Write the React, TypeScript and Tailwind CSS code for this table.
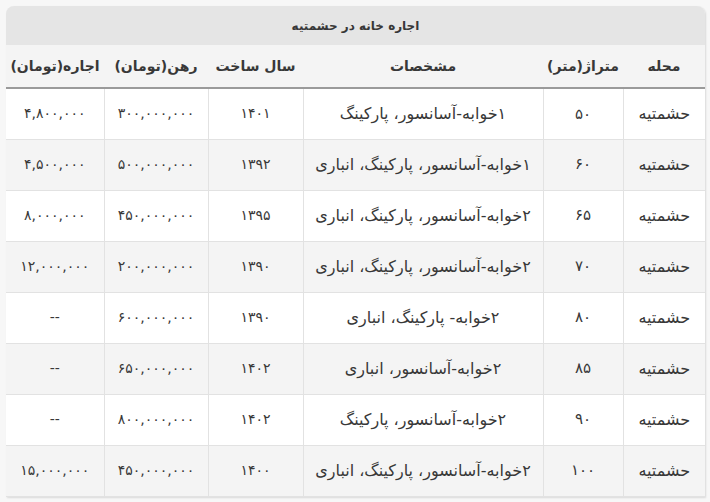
import React from 'react';

const rows = [
  ['حشمتیه', '۵۰', '۱خوابه-آسانسور، پارکینگ', '۱۴۰۱', '۳۰۰,۰۰۰,۰۰۰', '۴,۸۰۰,۰۰۰'],
  ['حشمتیه', '۶۰', '۱خوابه-آسانسور، پارکینگ، انباری', '۱۳۹۲', '۵۰۰,۰۰۰,۰۰۰', '۴,۵۰۰,۰۰۰'],
  ['حشمتیه', '۶۵', '۲خوابه-آسانسور، پارکینگ، انباری', '۱۳۹۵', '۴۵۰,۰۰۰,۰۰۰', '۸,۰۰۰,۰۰۰'],
  ['حشمتیه', '۷۰', '۲خوابه-آسانسور، پارکینگ، انباری', '۱۳۹۰', '۲۰۰,۰۰۰,۰۰۰', '۱۲,۰۰۰,۰۰۰'],
  ['حشمتیه', '۸۰', '۲خوابه- پارکینگ، انباری', '۱۳۹۰', '۶۰۰,۰۰۰,۰۰۰', '--'],
  ['حشمتیه', '۸۵', '۲خوابه-آسانسور، انباری', '۱۴۰۲', '۶۵۰,۰۰۰,۰۰۰', '--'],
  ['حشمتیه', '۹۰', '۲خوابه-آسانسور، پارکینگ', '۱۴۰۲', '۸۰۰,۰۰۰,۰۰۰', '--'],
  ['حشمتیه', '۱۰۰', '۲خوابه-آسانسور، پارکینگ، انباری', '۱۴۰۰', '۴۵۰,۰۰۰,۰۰۰', '۱۵,۰۰۰,۰۰۰'],
];

const headers = ['محله', 'متراژ(متر)', 'مشخصات', 'سال ساخت', 'رهن(تومان)', 'اجاره(تومان)'];
const widths = ['w-[82px]', 'w-[80px]', 'w-[240px]', 'w-[95px]', 'w-[104px]', 'w-[98px]'];

// word columns are set a little larger than number columns
const cellSize = ['text-[16px]', 'text-[15px]', 'text-[16px]', 'text-[14px]', 'text-[14px]', 'text-[14px]'];

export default function App() {
  return (
    <div
      dir="rtl"
      className="w-[710px] h-[502px] bg-[#f7f7f7] px-[5px] pt-[6px] text-[#383838] font-['DejaVu_Sans',sans-serif]"
    >
      <div className="w-[699px] shadow-[1px_1px_2px_rgba(0,0,0,0.12)] rounded-t-lg overflow-hidden">
        <div className="h-[39px] bg-[#e5e5e5] flex items-center justify-center text-[12px] font-bold">
          اجاره خانه در حشمتیه
        </div>
        <table className="w-full table-fixed border-collapse">
          <colgroup>
            {widths.map((w, i) => (
              <col key={i} className={w} />
            ))}
          </colgroup>
          <thead>
            <tr className="h-[43px] bg-[#f4f4f4] border-b-2 border-[#9a9a9a]">
              {headers.map((h, i) => (
                <th key={i} className="text-[14px] font-bold text-center p-0 whitespace-nowrap">
                  {h}
                </th>
              ))}
            </tr>
          </thead>
          <tbody>
            {rows.map((r, ri) => (
              <tr
                key={ri}
                className={`h-[51px] border-b border-[#e2e2e2] ${ri % 2 === 1 ? 'bg-[#f4f4f4]' : 'bg-white'}`}
              >
                {r.map((c, ci) => (
                  <td
                    key={ci}
                    className={`${cellSize[ci]} text-center border-l border-[#e2e2e2] last:border-l-0 p-0 whitespace-nowrap`}
                  >
                    {c}
                  </td>
                ))}
              </tr>
            ))}
          </tbody>
        </table>
      </div>
    </div>
  );
}
